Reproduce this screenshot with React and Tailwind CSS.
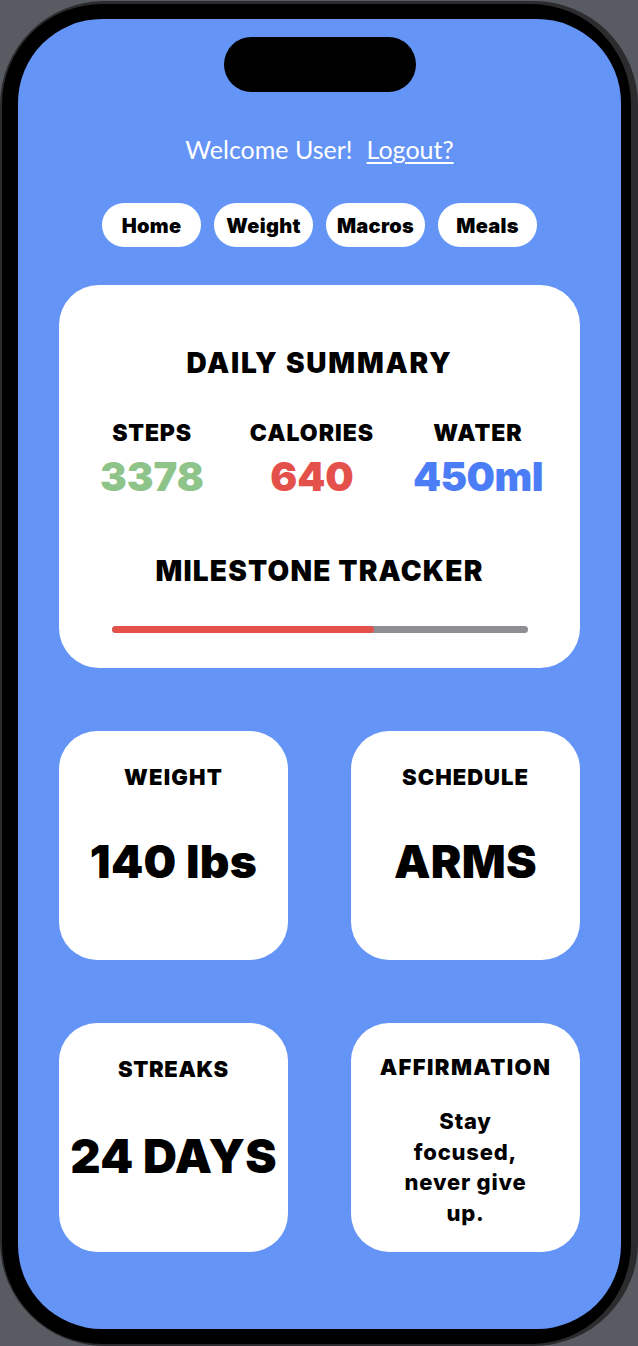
export default function App() {
  const navItems = ['Home', 'Weight', 'Macros', 'Meals'];

  return (
    <div className="w-[638px] h-[1346px] bg-[#585c62] pt-[1px] font-['Inter','Liberation_Sans',sans-serif]">
      {/* phone frame */}
      <div className="h-[1345px] w-[638px] rounded-[104px] bg-[#2c2c2e] pl-[2px] pr-[7px] pt-[3px] pb-[2px]">
        <div className="h-full w-full rounded-[100px] bg-black pl-[16px] pr-[10px] pt-[15px] pb-[15px]">
          <div className="flex h-full w-full flex-col items-center rounded-[84px] bg-[#6594f7]">
            {/* dynamic island */}
            <div className="mt-[18px] h-[55px] w-[192px] rounded-full bg-black" />

            {/* welcome */}
            <div className="mt-[45px] flex items-center gap-[14px] font-['Lato',sans-serif] text-[25px] leading-none text-white">
              <span>Welcome User!</span>
              <a className="underline underline-offset-[3px]">Logout?</a>
            </div>

            {/* nav */}
            <div className="mt-[41px] flex gap-[13px]">
              {navItems.map((item) => (
                <button
                  key={item}
                  className="h-[44px] w-[99px] rounded-full bg-white pt-[2px] text-[20px] font-black tracking-[0.3px] text-black"
                >
                  {item}
                </button>
              ))}
            </div>

            {/* daily summary */}
            <div className="mt-[38px] flex h-[383px] w-[521px] flex-col rounded-[40px] bg-white">
              <h2 className="mt-[64px] text-center text-[28px] font-black leading-none tracking-[1.8px] text-black">
                DAILY SUMMARY
              </h2>

              <div className="mt-[45px] flex gap-[30px] pl-[33px]">
                <div className="flex w-[120px] flex-col items-center">
                  <span className="text-[23px] font-black leading-none tracking-[0.8px] text-black">STEPS</span>
                  <span className="mt-[12px] text-[40px] font-black leading-none text-[#8ec48a]">3378</span>
                </div>
                <div className="flex w-[140px] flex-col items-center">
                  <span className="text-[23px] font-black leading-none tracking-[1px] text-black">CALORIES</span>
                  <span className="mt-[12px] text-[40px] font-black leading-none text-[#e4514b]">640</span>
                </div>
                <div className="flex w-[132px] flex-col items-center">
                  <span className="text-[23px] font-black leading-none tracking-[1px] text-black">WATER</span>
                  <span className="mt-[12px] text-[40px] font-black leading-none tracking-[-0.5px] text-[#4b7ef6]">450ml</span>
                </div>
              </div>

              <h2 className="mt-[60px] text-center text-[28px] font-black leading-none tracking-[1.2px] text-black">
                MILESTONE TRACKER
              </h2>

              <div className="mx-auto mt-[41px] flex h-[7px] w-[416px] overflow-hidden rounded-full bg-[#8e8e93]">
                <div className="h-full w-[63%] rounded-full bg-[#e4514b]" />
              </div>
            </div>

            {/* tiles */}
            <div className="mt-[63px] grid grid-cols-2 gap-x-[63px] gap-y-[63px]">
              <div className="flex h-[229px] w-[229px] flex-col items-center rounded-[38px] bg-white">
                <span className="mt-[35px] text-[22px] font-black leading-none tracking-[1.2px] text-black">WEIGHT</span>
                <span className="mt-[50px] text-[46px] font-black leading-none tracking-[0.3px] text-black">140 lbs</span>
              </div>
              <div className="flex h-[229px] w-[229px] flex-col items-center rounded-[38px] bg-white">
                <span className="mt-[35px] text-[22px] font-black leading-none tracking-[1px] text-black">SCHEDULE</span>
                <span className="mt-[50px] text-[46px] font-black leading-none tracking-[0.3px] text-black">ARMS</span>
              </div>
              <div className="flex h-[229px] w-[229px] flex-col items-center rounded-[38px] bg-white">
                <span className="mt-[35px] text-[22px] font-black leading-none tracking-[0.6px] text-black">STREAKS</span>
                <span className="mt-[52px] text-[47px] font-black leading-none tracking-[0.2px] text-black">24 DAYS</span>
              </div>
              <div className="flex h-[229px] w-[229px] flex-col items-center rounded-[38px] bg-white">
                <span className="mt-[33px] text-[22px] font-black leading-none tracking-[1.4px] text-black">AFFIRMATION</span>
                <p className="mt-[28px] w-[150px] text-center text-[22px] font-extrabold leading-[30.5px] tracking-[0.8px] text-black">
                  Stay focused, never give up.
                </p>
              </div>
            </div>
          </div>
        </div>
      </div>
    </div>
  );
}
